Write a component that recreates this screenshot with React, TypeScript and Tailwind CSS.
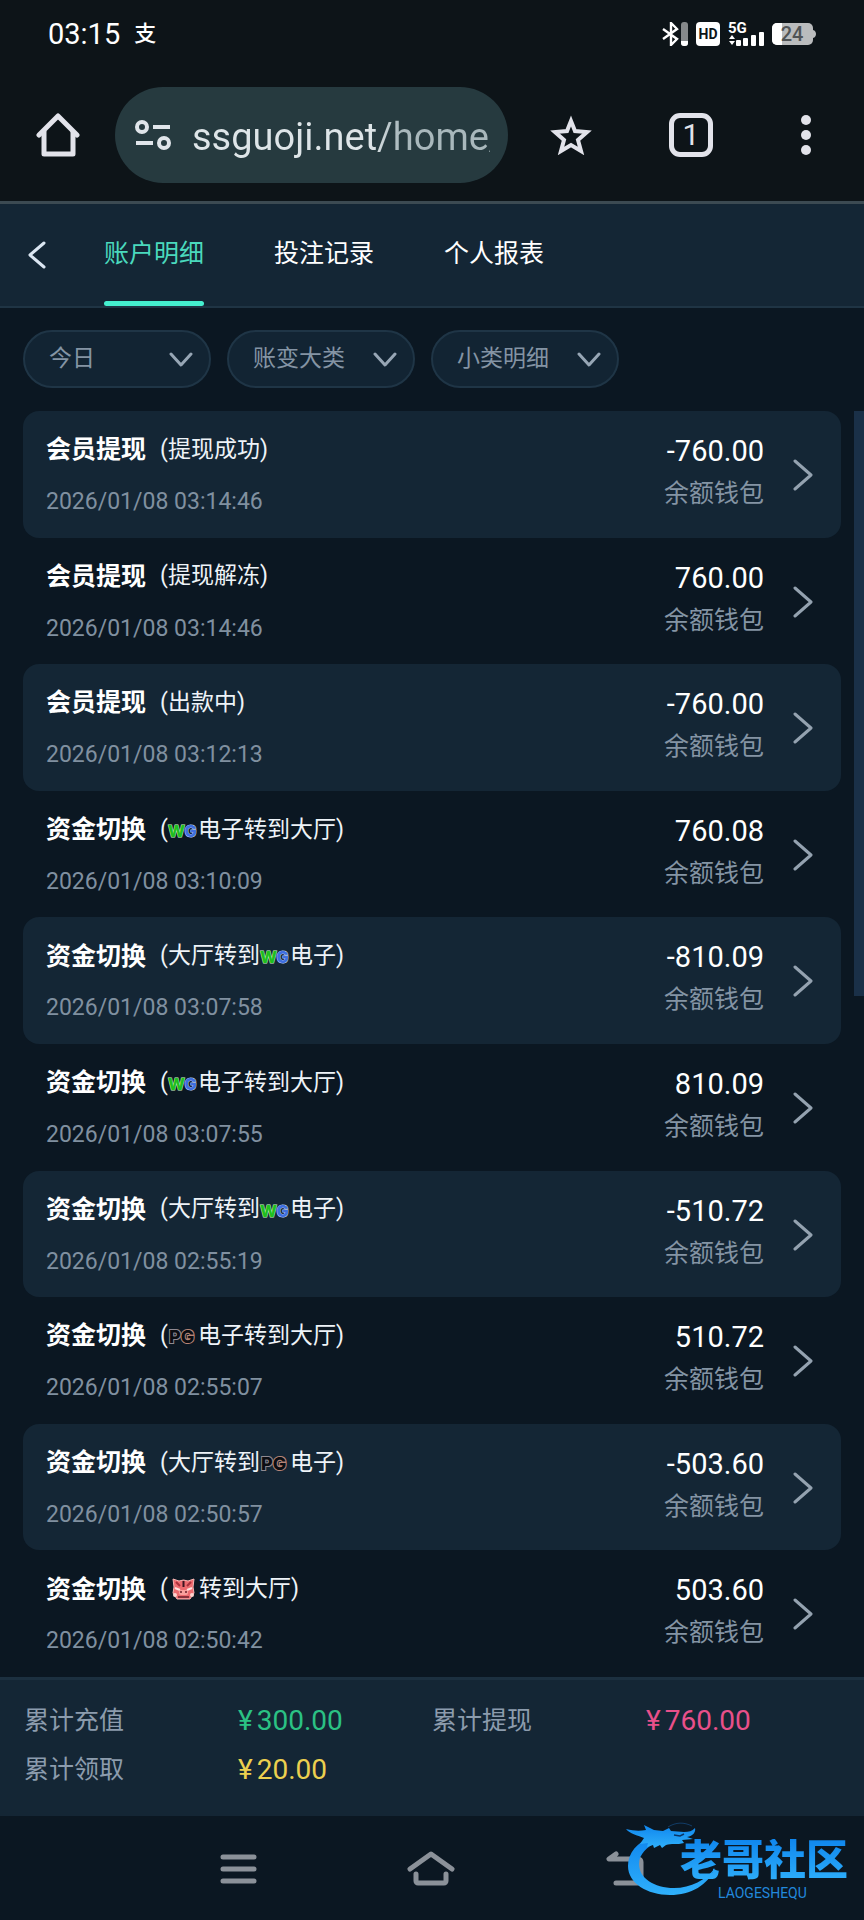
import React from "react";

type Brand = "wg" | "pg" | "pig";

interface RecordItem {
  title: string;
  before: string;
  brand?: Brand;
  after?: string;
  time: string;
  amount: string;
}

interface FilterProps {
  id: string;
  label: string;
  options: string[];
}

const RECORDS: RecordItem[] = [
  { title: "会员提现", before: "(提现成功)", time: "2026/01/08 03:14:46", amount: "-760.00" },
  { title: "会员提现", before: "(提现解冻)", time: "2026/01/08 03:14:46", amount: "760.00" },
  { title: "会员提现", before: "(出款中)", time: "2026/01/08 03:12:13", amount: "-760.00" },
  { title: "资金切换", before: "(", brand: "wg", after: "电子转到大厅)", time: "2026/01/08 03:10:09", amount: "760.08" },
  { title: "资金切换", before: "(大厅转到", brand: "wg", after: "电子)", time: "2026/01/08 03:07:58", amount: "-810.09" },
  { title: "资金切换", before: "(", brand: "wg", after: "电子转到大厅)", time: "2026/01/08 03:07:55", amount: "810.09" },
  { title: "资金切换", before: "(大厅转到", brand: "wg", after: "电子)", time: "2026/01/08 02:55:19", amount: "-510.72" },
  { title: "资金切换", before: "(", brand: "pg", after: "电子转到大厅)", time: "2026/01/08 02:55:07", amount: "510.72" },
  { title: "资金切换", before: "(大厅转到", brand: "pg", after: "电子)", time: "2026/01/08 02:50:57", amount: "-503.60" },
  { title: "资金切换", before: "(", brand: "pig", after: "转到大厅)", time: "2026/01/08 02:50:42", amount: "503.60" },
];

const TABS = ["账户明细", "投注记录", "个人报表"];

const FILTERS: FilterProps[] = [
  { id: "date", label: "日期", options: ["今日"] },
  { id: "category", label: "大类", options: ["账变大类"] },
  { id: "detail", label: "小类", options: ["小类明细"] },
];

const TOTALS = [
  { label: "累计充值", value: "300.00", color: "text-[#2bc184]" },
  { label: "累计提现", value: "760.00", color: "text-[#e8508a]" },
  { label: "累计领取", value: "20.00", color: "text-[#ecd04f]" },
];

function StatusBar() {
  return (
    <div className="flex h-[68px] items-center justify-between pl-12 pr-12 text-white">
      <div className="flex items-center gap-[14px]">
        <span className="text-[29px] leading-8">03:15</span>
        <span className="text-[22px] font-medium leading-8">支</span>
      </div>
      <div className="flex items-center gap-2">
        {/* bluetooth with the headset's battery level */}
        <svg width="26" height="24" viewBox="0 0 26 24" fill="none">
          <path d="M1 7l14 10-6 6V1l6 6L1 17" stroke="#fff" strokeWidth="2.4" />
          <rect x="19" y="0" width="7" height="24" rx="3" fill="#85898b" />
          <path d="M19 19h7v2a3 3 0 0 1-3 3h-1a3 3 0 0 1-3-3z" fill="#fff" />
        </svg>
        <span className="flex h-6 w-6 items-center justify-center rounded bg-white text-[14px] font-bold leading-4 text-[#0d1418]">
          HD
        </span>
        <svg className="overflow-visible" width="36" height="24" viewBox="0 0 36 24">
          <text x="0" y="11" fontSize="15" fontWeight="700" fill="#fff" fontFamily="Roboto">5G</text>
          <path d="M1 17l3-4 3 4zM1 19l3 4 3-4z" fill="#fff" />
          <g fill="#fff">
            <rect x="8" y="18" width="5" height="6" rx="1" />
            <rect x="15" y="16" width="5" height="8" rx="1" />
            <rect x="23" y="13" width="5" height="11" rx="1" />
            <rect x="31" y="10" width="5" height="14" rx="1" />
          </g>
        </svg>
        <svg width="44" height="22" viewBox="0 0 44 22">
          <rect width="41" height="22" rx="5" fill="#babcbd" />
          <path d="M41 7c4 1 4 7 0 8z" fill="#babcbd" />
          <path d="M5 0h5v22H5a5 5 0 0 1-5-5V5a5 5 0 0 1 5-5z" fill="#fff" />
          <text x="20" y="18" textAnchor="middle" fontSize="20" fontWeight="500" fill="#505456" fontFamily="Roboto">24</text>
        </svg>
      </div>
    </div>
  );
}

function BrowserBar() {
  return (
    <div className="flex h-[133px] items-center">
      <button aria-label="Home" className="flex w-[115px] justify-center">
        <svg width="44" height="44" viewBox="0 0 44 44" fill="none" stroke="#e2e3ea" strokeWidth="5" strokeLinejoin="round">
          <path d="M3 22L22 3l19 19" strokeLinecap="round" />
          <path d="M8 18v23h29V18" />
        </svg>
      </button>
      <div className="flex h-24 min-w-0 flex-1 items-center gap-[21px] rounded-full bg-[#263a3f] pl-5 pr-[18px]">
        <svg className="shrink-0" width="36" height="30" viewBox="0 0 36 30" fill="none" stroke="#e0e5ea" strokeWidth="4">
          <circle cx="7" cy="7" r="5" />
          <path d="M18 7h17M1 23h17" />
          <circle cx="29" cy="23" r="5" />
        </svg>
        <input
          aria-label="Address"
          readOnly
          value="ssguoji.net/home/"
          className="w-full min-w-0 bg-gradient-to-r from-[#dee5e8] from-60% to-[#a9b8bc] to-70% bg-clip-text pt-1 text-[38px] leading-[52px] text-transparent outline-none"
        />
      </div>
      <button aria-label="Bookmark" className="flex w-[126px] justify-center">
        <svg width="42" height="40" viewBox="0 0 42 40" fill="none" stroke="#e2e3ea" strokeWidth="4">
          <path d="M21 6l4 10 12 1-9 8 3 11-10-6-10 6 3-11-9-8 12-1z" />
        </svg>
      </button>
      <button aria-label="Tabs" className="flex w-[114px] justify-center">
        <span className="flex h-11 w-11 items-center justify-center rounded-[11px] border-[5px] border-[#e2e3ea] text-[30px] leading-8 text-[#e2e3ea]">
          1
        </span>
      </button>
      <button aria-label="More" className="flex w-[116px] justify-center">
        <svg width="10" height="40" viewBox="0 0 10 40" fill="#e2e3ea">
          <circle cx="5" cy="5" r="5" />
          <circle cx="5" cy="20" r="5" />
          <circle cx="5" cy="35" r="5" />
        </svg>
      </button>
    </div>
  );
}

function TabBar() {
  return (
    <nav className="flex h-[107px] items-stretch gap-[70px] border-b-2 border-t-[3px] border-b-[#1f3444] border-t-[#3c4a52] bg-[#142635] pl-7">
      <button aria-label="返回" className="-mr-3 flex w-[18px] items-center">
        <svg width="18" height="28" viewBox="0 0 18 28" fill="none" stroke="#dbe6f2" strokeWidth="3" strokeLinecap="round" strokeLinejoin="round">
          <path d="M16 2L2 14l14 12" />
        </svg>
      </button>
      {TABS.map((tab, i) => (
        <button
          key={tab}
          className={
            i === 0
              ? "flex flex-col justify-between text-[#4ad9bd]"
              : "flex flex-col justify-between text-white"
          }
        >
          <span className="pt-8 text-[25px] leading-9">{tab}</span>
          {i === 0 && <span className="h-[5px] w-full rounded-full bg-[#45efcf]" />}
        </button>
      ))}
    </nav>
  );
}

const Filter: React.FC<FilterProps> = ({ id, label, options }) => {
  return (
    <div className="relative">
      <select
        id={id}
        aria-label={label}
        className="h-[58px] w-[188px] appearance-none rounded-full border-2 border-[#1f3546] bg-[#122433] pl-6 text-[23px] text-[#8494a4] outline-none"
      >
        {options.map((o) => (
          <option key={o}>{o}</option>
        ))}
      </select>
      <svg className="pointer-events-none absolute right-[18px] top-[22px]" width="24" height="16" viewBox="0 0 24 16" fill="none" stroke="#97a6b5" strokeWidth="3" strokeLinecap="round" strokeLinejoin="round">
        <path d="M2 2l10 11L22 2" />
      </svg>
    </div>
  );
};

function BrandIcon({ brand }: { brand: Brand }) {
  if (brand === "pig") {
    return (
      <svg className="ml-1 mr-1 shrink-0" width="23" height="22" viewBox="0 0 23 22">
        <path d="M1 1l6 2 4.500-1L16 3l6-2-1 8 1 6-4 6H5l-4-6 1-6z" fill="#ee6b70" stroke="#f6b7b5" strokeWidth="1" />
        <path d="M11.500 3v6" stroke="#3b1520" strokeWidth="2" />
        <path d="M4 4l4 4M19 4l-4 4" stroke="#a8323c" strokeWidth="2" />
        <path d="M3 10l5 2M20 10l-5 2" stroke="#ffe1dc" strokeWidth="2" />
        <rect x="7" y="12" width="9" height="5" rx="2" fill="#f9a09d" />
        <path d="M9 13v2M14 13v2M6 19h11" stroke="#6b1f2a" strokeWidth="1.500" />
        <circle cx="3" cy="17" r="2" fill="#ffd4cf" />
        <circle cx="20" cy="17" r="2" fill="#ffd4cf" />
      </svg>
    );
  }
  if (brand === "wg") {
    return (
      <svg className="shrink-0 overflow-visible" width="30" height="16" viewBox="0 0 30 16" fontFamily="Inter" fontWeight="800" fontSize="16" strokeWidth="1" paintOrder="stroke">
        <text x="0" y="15">
          <tspan fill="#1fbf1f" stroke="#c8f5c0">W</tspan>
          <tspan fill="#3f6fe0" stroke="#b9cdf5">G</tspan>
        </text>
      </svg>
    );
  }
  return (
    <svg className="shrink-0 overflow-visible" width="30" height="16" viewBox="0 0 30 16" fontFamily="Inter" fontWeight="800" fontSize="18" strokeWidth="2" paintOrder="stroke" fill="#0b0d12">
      <text x="1" y="15">
        <tspan stroke="#8f8a92">P</tspan>
        <tspan stroke="#b58476">G</tspan>
      </text>
    </svg>
  );
}

function RecordRow({ item, filled }: { item: RecordItem; filled: boolean }) {
  return (
    <li className={filled ? "rounded-2xl bg-[#142635]" : "rounded-2xl"}>
      <button className="flex h-full w-full items-start justify-between pl-[23px] pr-7 text-left">
        <div className="pt-[21px]">
          <div className="flex h-9 items-center gap-[14px]">
            <span className="text-[25px] font-bold text-white">{item.title}</span>
            <span className="flex items-center text-[23px] text-[#eef3f8]">
              {item.before}
              {item.brand && <BrandIcon brand={item.brand} />}
              {item.after}
            </span>
          </div>
          <div className="pt-[18px] text-[23px] leading-8 text-[#8090a0]">{item.time}</div>
        </div>
        <div className="flex gap-[29px]">
          <div className="pt-6 text-right">
            <div className="text-[29px] leading-8 text-white">{item.amount}</div>
            <div className="pt-[9px] text-[25px] leading-9 text-[#8494a4]">余额钱包</div>
          </div>
          <svg className="mt-12" width="20" height="32" viewBox="0 0 20 32" fill="none" stroke="#94a2b0" strokeWidth="3" strokeLinecap="round" strokeLinejoin="round">
            <path d="M2 2l16 14L2 30" />
          </svg>
        </div>
      </button>
    </li>
  );
}

function Watermark() {
  return (
    <div className="pointer-events-none absolute bottom-5 right-4 h-20 w-[224px]">
      <svg className="absolute left-0 top-0" width="100" height="80" viewBox="0 0 100 80">
        <defs>
          <linearGradient id="dragon" x1="0" y1="0" x2="0" y2="1">
            <stop offset="0" stopColor="#0f86ee" />
            <stop offset="1" stopColor="#2fb0fb" />
          </linearGradient>
        </defs>
        <g fill="url(#dragon)">
          <path d="M28 17C13 22 4 33 4 46c0 17 19 29 42 29 21 0 38-10 45-27-9 12-24 20-41 20-20 0-35-10-35-24 0-10 8-17 19-23z" />
          {/* whisker, horns, mane and jaws of the dragon's head */}
          <path d="M2 9c8 2 14 2 20 1l-2-5 10 5 9 1 6-3 2 3 13 1c5 0 8-1 11-4 1 4-2 8-8 9l6 2-11 1 2 3c-7 2-13 0-18 2l-4 3-2-3-6 3-1-3-6 2 1-4-8 1 4-6C13 15 6 14 2 9z" />
        </g>
        <path d="M44 7c8-5 16-5 24-1" stroke="#123c66" strokeWidth="1" fill="none" />
        <path d="M50 15l6 1 4-2" stroke="#0b3564" strokeWidth="1.500" fill="none" />
      </svg>
      <div className="absolute right-0 top-[19px] bg-gradient-to-b from-[#0f86ee] to-[#2fb0fb] bg-clip-text text-[42px] font-black leading-[44px] text-transparent">
        老哥社区
      </div>
      <div className="absolute -bottom-px left-[94px] text-[14px] leading-4 text-[#2288dc]">
        LAOGESHEQU
      </div>
    </div>
  );
}

function SystemNav() {
  return (
    <div className="relative flex h-[104px] items-center justify-center gap-[150px] pt-[2px]">
      <button aria-label="最近任务">
        <svg width="38" height="36" viewBox="0 0 38 36" stroke="#8b9199" strokeWidth="5" strokeLinecap="round">
          <path d="M4 6h31M4 18h31M4 30h31" />
        </svg>
      </button>
      <button aria-label="主屏幕">
        <svg width="48" height="36" viewBox="0 0 48 36" fill="none" stroke="#8b9199" strokeWidth="5" strokeLinecap="round" strokeLinejoin="round">
          <path d="M3 18L24 3l21 15M9 23v7a2 2 0 0 0 2 2h26a2 2 0 0 0 2-2v-7" />
        </svg>
      </button>
      <button aria-label="后退">
        <svg width="40" height="36" viewBox="0 0 40 36" fill="none" stroke="#8b9199" strokeWidth="5" strokeLinecap="round" strokeLinejoin="round">
          <path d="M11 3L4 8h29a3 3 0 0 1 3 3v18a3 3 0 0 1-3 3H11" />
        </svg>
      </button>
      <Watermark />
    </div>
  );
}

export default function App() {
  return (
    <div className="flex min-h-screen flex-col bg-[#0b1722] font-[Roboto,'Noto_Sans_CJK_SC',sans-serif]">
      <header className="bg-[#0d1418]">
        <StatusBar />
        <BrowserBar />
      </header>
      <TabBar />
      <div className="flex gap-4 px-[23px] pb-[23px] pt-[22px]">
        {FILTERS.map((f) => (
          <Filter key={f.id} {...f} />
        ))}
      </div>
      <main className="relative flex flex-1 flex-col px-[23px]">
        <ul className="grid flex-1 auto-rows-fr">
          {RECORDS.map((item, i) => (
            <RecordRow key={i} item={item} filled={i % 2 === 0} />
          ))}
        </ul>
        {/* scroll thumb */}
        <div className="absolute right-0 top-0 h-[585px] w-[10px] bg-[#1a3048]" />
      </main>
      <footer>
        <dl className="grid h-[139px] grid-cols-4 content-start gap-y-[13px] border-t-[3px] border-[#1c3040] bg-[#142635] px-6 pt-[23px] leading-9">
          {TOTALS.map((t) => (
            <React.Fragment key={t.label}>
              <dt className="h-9 text-[25px] text-[#8c9cad]">{t.label}</dt>
              <dd className={t.color}>
                <span className="flex h-9 items-center gap-1 pl-[10px] text-[28px]">
                  <span>¥</span>
                  <span>{t.value}</span>
                </span>
              </dd>
            </React.Fragment>
          ))}
        </dl>
        <SystemNav />
      </footer>
    </div>
  );
}
